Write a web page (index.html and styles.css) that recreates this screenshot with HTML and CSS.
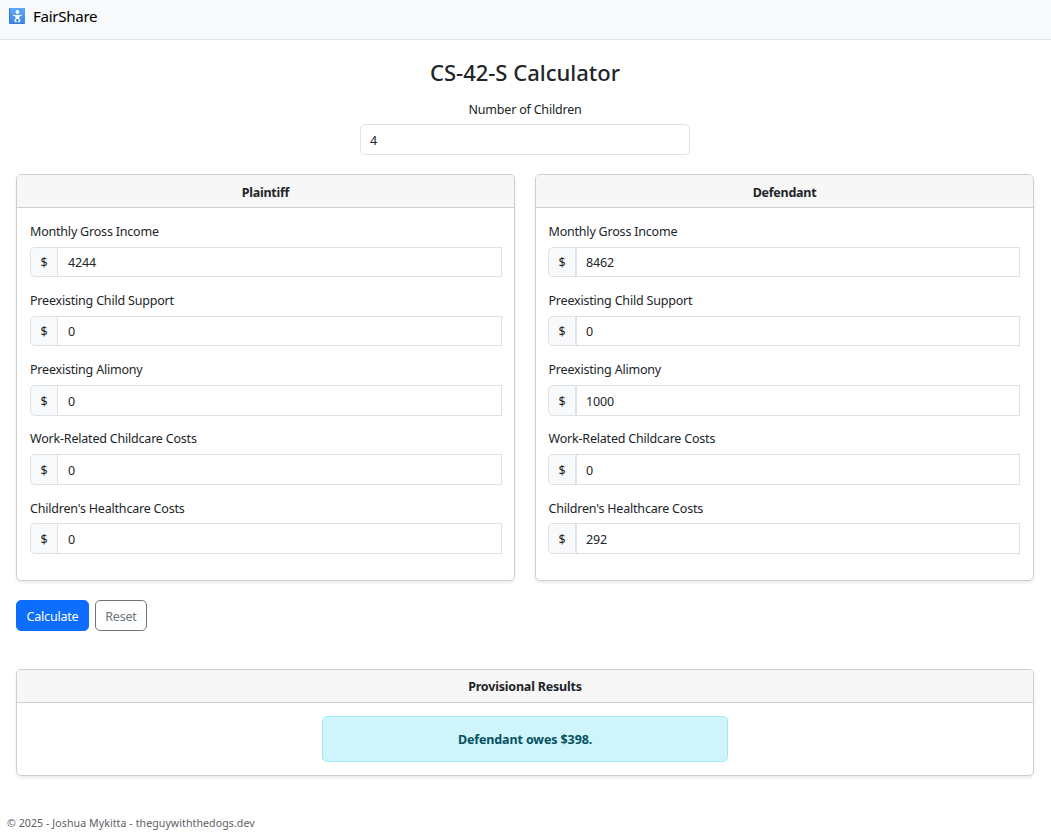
FILE: index.html
```html
<!DOCTYPE html>
<html lang="en">
<head>
<meta charset="utf-8">
<title>FairShare</title>
<link rel="stylesheet" href="styles.css">
</head>
<body>
<header class="navbar">
  <svg class="logo" width="16" height="16" viewBox="0 0 16 16">
    <defs><linearGradient id="tile" x1="0" y1="0" x2="0" y2="1"><stop offset="0" stop-color="#5aaaf8"/><stop offset="1" stop-color="#3c85e6"/></linearGradient></defs>
    <rect width="16" height="16" rx="1.2" fill="#3278c8"/>
    <rect x="1" width="15" height="15.5" rx="1" fill="url(#tile)"/>
    <g fill="#fff" stroke="#fff" stroke-linecap="round" stroke-linejoin="round">
      <circle cx="8.4" cy="4" r="1.9" stroke="none"/>
      <path fill="none" stroke-width="1.2" d="M4.6 7.2 6.4 7.8h4l1.8-.6"/>
      <rect x="6.4" y="7.2" width="4" height="3.8" rx="1" stroke="none"/>
      <path fill="none" stroke-width="1.5" d="M6.6 11.6 6 12.6l1 1M10.2 11.6l.6 1-1 1"/>
    </g>
  </svg>
  <span class="brand">FairShare</span>
</header>
<main class="page">
  <h1 class="title">CS-42-S Calculator</h1>
  <div class="children">
    <label class="label" for="children">Number of Children</label>
    <input class="control rounded" id="children" value="4">
  </div>
  <div class="parties">
    <section class="card">
      <h2 class="card-header">Plaintiff</h2>
      <div class="card-body">
        <div class="field"><label class="label" for="p1">Monthly Gross Income</label><div class="group"><span class="addon">$</span><input class="control" id="p1" value="4244"></div></div>
        <div class="field"><label class="label" for="p2">Preexisting Child Support</label><div class="group"><span class="addon">$</span><input class="control" id="p2" value="0"></div></div>
        <div class="field"><label class="label" for="p3">Preexisting Alimony</label><div class="group tall"><span class="addon">$</span><input class="control" id="p3" value="0"></div></div>
        <div class="field"><label class="label" for="p4">Work-Related Childcare Costs</label><div class="group tall"><span class="addon">$</span><input class="control" id="p4" value="0"></div></div>
        <div class="field"><label class="label last" for="p5">Children's Healthcare Costs</label><div class="group tall"><span class="addon">$</span><input class="control" id="p5" value="0"></div></div>
      </div>
    </section>
    <section class="card defendant">
      <h2 class="card-header">Defendant</h2>
      <div class="card-body">
        <div class="field"><label class="label" for="d1">Monthly Gross Income</label><div class="group"><span class="addon">$</span><input class="control" id="d1" value="8462"></div></div>
        <div class="field"><label class="label" for="d2">Preexisting Child Support</label><div class="group"><span class="addon">$</span><input class="control" id="d2" value="0"></div></div>
        <div class="field"><label class="label" for="d3">Preexisting Alimony</label><div class="group tall"><span class="addon">$</span><input class="control" id="d3" value="1000"></div></div>
        <div class="field"><label class="label" for="d4">Work-Related Childcare Costs</label><div class="group tall"><span class="addon">$</span><input class="control" id="d4" value="0"></div></div>
        <div class="field"><label class="label last" for="d5">Children's Healthcare Costs</label><div class="group tall"><span class="addon">$</span><input class="control" id="d5" value="292"></div></div>
      </div>
    </section>
  </div>
  <div class="actions">
    <button class="btn primary">Calculate</button>
    <button class="btn outline">Reset</button>
  </div>
  <section class="card results">
    <h2 class="card-header">Provisional Results</h2>
    <div class="results-body"><div class="alert">Defendant owes $398.</div></div>
  </section>
</main>
<footer class="footer">© 2025 - Joshua Mykitta - theguywiththedogs.dev</footer>
</body>
</html>
```
FILE: styles.css
```css
* { box-sizing: border-box; }
body {
  margin: 0;
  background: #fff;
  color: #212529;
  font: 12.5px/20px "Noto Sans", "Open Sans", sans-serif;
  letter-spacing: -0.2px;
}
.navbar {
  height: 40px;
  padding: 0 9px 7px;
  display: flex;
  align-items: center;
  gap: 8px;
  background: #f8f9fa;
  border-bottom: 1px solid #dee2e6;
}
.logo { flex: none; }
.brand { color: #000; font-size: 15.2px; letter-spacing: -0.35px; }
.page { padding: 19px 17px 0 16px; }
.title {
  margin: 0;
  height: 27px;
  font-size: 22px;
  line-height: 27px;
  font-weight: 500;
  letter-spacing: 0;
  text-align: center;
}
.children {
  width: 330px;
  margin: 13px auto 0;
  display: flex;
  flex-direction: column;
  gap: 5px;
  text-align: center;
}
.label { display: block; height: 20px; line-height: 22px; white-space: nowrap; }
.last { line-height: 24px; }
.control {
  flex: 1;
  min-width: 0;
  width: 100%;
  padding: 2px 10px 0;
  border: 1px solid #dee2e6;
  border-radius: 0;
  background: #fff;
  color: #212529;
  font: inherit;
  letter-spacing: -0.15px;
  outline: 0;
}
.rounded { flex: none; height: 31px; padding-left: 9px; border-radius: 5px; }
.parties { display: grid; grid-template-columns: 1fr 1fr; gap: 20px; margin-top: 19px; }
.card {
  height: 407px;
  border: 1px solid #cecfcf;
  border-radius: 5px;
  background: #fff;
  box-shadow: 0 2px 3px rgba(0, 0, 0, 0.08);
}
.card-header {
  height: 33px;
  margin: 0;
  border-bottom: 1px solid #cecfcf;
  border-radius: 4px 4px 0 0;
  background: #f7f7f7;
  font-size: 12.5px;
  line-height: 36px;
  font-weight: 700;
  letter-spacing: -0.25px;
  text-align: center;
}
.card-body { padding: 13px 12px 0 13px; }
.defendant .card-body { padding: 13px 13px 0 12px; }
.defendant .label { padding-left: 0.5px; }
.field { height: 69px; }
.group { display: flex; height: 30px; margin-top: 6px; }
.tall { height: 31px; }
.addon {
  width: 27px;
  flex: none;
  border: 1px solid #dee2e6;
  border-right: 0;
  border-radius: 5px 0 0 5px;
  background: #f8f9fa;
  line-height: 30px;
  text-align: center;
}
.tall .addon { line-height: 31px; }
.defendant .addon { border-right: 1px solid #dee2e6; width: 28px; }
.defendant .control { padding-left: 9px; }
.actions { display: flex; gap: 6px; margin-top: 19px; }
.btn {
  height: 31px;
  padding: 2px 0 0;
  border: 1px solid #0d6efd;
  border-radius: 5px;
  font: inherit;
  letter-spacing: -0.2px;
}
.primary { width: 73px; background: #0d6efd; color: #fff; }
.outline { width: 52px; border-color: #6c757d; background: #fff; color: #6c757d; }
.results { height: 107px; margin-top: 38px; }
.results .card-header { line-height: 34px; letter-spacing: -0.2px; }
.results-body { padding-top: 13px; }
.alert {
  width: 406px;
  height: 46px;
  margin: 0 auto;
  border: 1px solid #9eeaf9;
  border-radius: 5px;
  background: #cff4fc;
  color: #055160;
  font-weight: 700;
  letter-spacing: -0.12px;
  line-height: 46px;
  text-align: center;
}
.footer {
  margin: 37px 0 0 7px;
  color: #5c6166;
  font-size: 10.6px;
  letter-spacing: 0.07px;
}
```
